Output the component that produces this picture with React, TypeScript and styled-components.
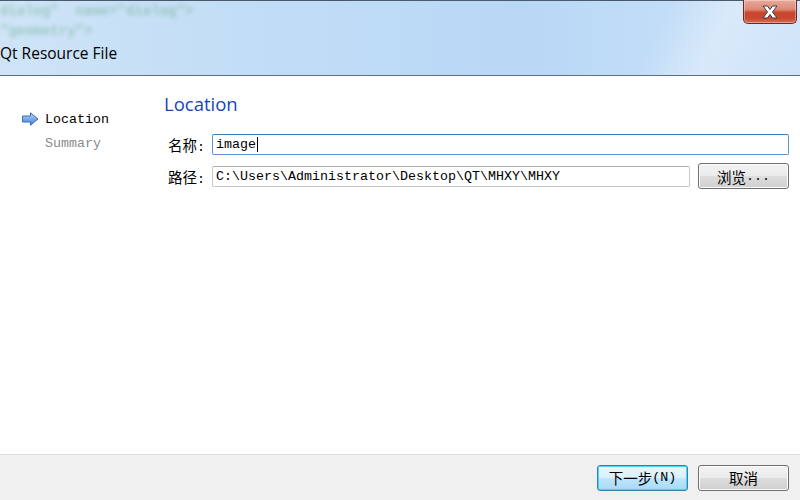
import React from "react";
import styled, { createGlobalStyle } from "styled-components";

const Global = createGlobalStyle`
  html, body { margin: 0; padding: 0; background: #ffffff; }
  body { width: 800px; height: 500px; overflow: hidden; }
  #root { width: 800px; height: 500px; }
`;

const Window = styled.div`
  width: 800px;
  height: 500px;
  display: flex;
  flex-direction: column;
  background: #ffffff;
  overflow: hidden;
`;

const TitleBar = styled.div`
  position: relative;
  height: 76px;
  flex: 0 0 76px;
  border-top: 1px solid #4a5b6e;
  border-bottom: 1px solid #5c6f86;
  box-sizing: border-box;
  background:
    linear-gradient(115deg, rgba(255,255,255,0) 0%, rgba(255,255,255,0) 80%, rgba(255,255,255,0.35) 88%, rgba(255,255,255,0.1) 100%),
    linear-gradient(90deg, #cfe4f7 0%, #c2ddf6 30%, #b9d8f6 65%, #c9e1f8 100%);
  display: flex;
  flex-direction: column;
  justify-content: flex-end;
  padding-bottom: 12px;
`;

const GhostCode = styled.div`
  position: absolute;
  left: 0;
  top: 0px;
  font-family: "Liberation Mono", monospace;
  font-size: 14px;
  line-height: 20px;
  font-weight: bold;
  color: #4fa070;
  opacity: 0.4;
  filter: blur(2.2px);
  white-space: pre;
`;

const TitleText = styled.div`
  font-family: "Open Sans", "Noto Sans", sans-serif;
  font-size: 15.5px;
  line-height: 20px;
  color: #000000;
  position: relative;
`;

const CloseButton = styled.div`
  position: absolute;
  right: 3px;
  top: -1px;
  width: 54px;
  height: 24px;
  box-sizing: border-box;
  border: 1px solid #6a2a1f;
  border-top: none;
  border-radius: 0 0 5px 5px;
  background: linear-gradient(180deg, #e9a899 0%, #de8a78 40%, #c9452c 55%, #c84a31 80%, #d66f55 100%);
  box-shadow: inset 0 0 0 1px rgba(255,255,255,0.35);
  display: flex;
  align-items: center;
  justify-content: center;
`;

const Body = styled.div`
  flex: 1;
  display: flex;
  flex-direction: row;
`;

const Sidebar = styled.div`
  width: 164px;
  flex: 0 0 164px;
  box-sizing: border-box;
  padding: 33px 0 0 22px;
  display: flex;
  flex-direction: column;
  gap: 4px;
`;

const NavItem = styled.div<{ $active?: boolean }>`
  display: flex;
  align-items: center;
  gap: 6px;
  height: 20px;
  font-family: "Liberation Mono", monospace;
  font-size: 13.33px;
  color: ${(p) => (p.$active ? "#000000" : "#8a8a8a")};
`;

const ArrowSlot = styled.span`
  width: 17px;
  height: 14px;
  display: inline-flex;
`;

const Main = styled.div`
  flex: 1;
  box-sizing: border-box;
  padding: 16px 11px 0 0;
  display: flex;
  flex-direction: column;
`;

const Heading = styled.div`
  font-family: "Open Sans", "Noto Sans", sans-serif;
  font-size: 18.5px;
  line-height: 24px;
  color: #1646b8;
  margin-bottom: 18px;
`;

const Form = styled.div`
  display: flex;
  flex-direction: column;
  gap: 8px;
`;

const Row = styled.div`
  display: flex;
  align-items: center;
  gap: 8px;
`;

const Label = styled.div`
  width: 36px;
  padding-left: 4px;
  white-space: nowrap;
  color: #000;
  display: flex;
  align-items: baseline;
`;

const Cjk = styled.span`
  font-family: "Noto Sans CJK SC", sans-serif;
  font-size: 14.5px;
`;

const Latin = styled.span`
  font-family: "Liberation Mono", monospace;
  font-size: 13.33px;
`;

const Field = styled.div<{ $focused?: boolean }>`
  flex: 1;
  height: 21px;
  box-sizing: border-box;
  border: 1px solid ${(p) => (p.$focused ? "#5d93c9" : "#c4c8cf")};
  border-top-color: ${(p) => (p.$focused ? "#3d7bbd" : "#abadb3")};
  border-radius: 2px;
  background: #fff;
  display: flex;
  align-items: center;
  padding-left: 3px;
  font-family: "Liberation Mono", monospace;
  font-size: 13.33px;
  color: #000;
  white-space: nowrap;
  overflow: hidden;
`;

const Caret = styled.span`
  display: inline-block;
  width: 1px;
  height: 15px;
  background: #000;
  margin-left: 1px;
`;

const Button = styled.div<{ $default?: boolean }>`
  width: 91px;
  height: 26px;
  box-sizing: border-box;
  border-radius: 3px;
  border: 1px solid ${(p) => (p.$default ? "#3c7fb1" : "#707070")};
  background: ${(p) =>
    p.$default
      ? "linear-gradient(180deg, #eaf6fd 0%, #d9f0fc 48%, #bee6fd 52%, #a7d9f5 100%)"
      : "linear-gradient(180deg, #f2f2f2 0%, #ebebeb 48%, #dddddd 52%, #cfcfcf 100%)"};
  box-shadow: ${(p) =>
    p.$default ? "inset 0 0 0 1px #48d3fb" : "inset 0 0 0 1px #fcfcfc"};
  display: flex;
  align-items: center;
  justify-content: center;
  color: #000;
`;

const Footer = styled.div`
  height: 46px;
  flex: 0 0 46px;
  box-sizing: border-box;
  background: #f0f0f0;
  border-top: 1px solid #dfdfdf;
  display: flex;
  align-items: center;
  justify-content: flex-end;
  gap: 10px;
  padding: 0 11px 0 0;
`;

const isCjk = (c: string) => /[\u3000-\u9fff\uff00-\uffef]/.test(c);

function Mixed({ text }: { text: string }) {
  const runs: { cjk: boolean; s: string }[] = [];
  for (const ch of text) {
    const c = isCjk(ch);
    const last = runs[runs.length - 1];
    if (last && last.cjk === c) last.s += ch;
    else runs.push({ cjk: c, s: ch });
  }
  return (
    <>
      {runs.map((r, i) =>
        r.cjk ? <Cjk key={i}>{r.s}</Cjk> : <Latin key={i}>{r.s}</Latin>
      )}
    </>
  );
}

function ArrowIcon() {
  return (
    <svg width="17" height="14" viewBox="0 0 17 14">
      <defs>
        <linearGradient id="ag" x1="0" y1="0" x2="0" y2="1">
          <stop offset="0" stopColor="#c2dcf8" />
          <stop offset="0.5" stopColor="#7aaae8" />
          <stop offset="1" stopColor="#4a82d4" />
        </linearGradient>
      </defs>
      <path
        d="M0.5 4 H8.5 V0.8 L16 7 L8.5 13.2 V10 H0.5 Z"
        fill="url(#ag)"
        stroke="#3a6cb4"
        strokeWidth="1"
        strokeLinejoin="round"
      />
    </svg>
  );
}

function CloseX() {
  return (
    <svg width="18" height="14" viewBox="0 0 18 14">
      <path
        d="M2 1 H6.5 L9 4.5 L11.5 1 H16 L11.5 7 L16 13 H11.5 L9 9.5 L6.5 13 H2 L6.5 7 Z"
        fill="#ffffff"
        stroke="#3d3d3d"
        strokeWidth="1"
        strokeLinejoin="round"
      />
    </svg>
  );
}

export default function App() {
  return (
    <>
      <Global />
      <Window>
        <TitleBar>
          <GhostCode>{'dialog"  name="dialog">\n"geometry">'}</GhostCode>
          <TitleText>Qt Resource File</TitleText>
          <CloseButton>
            <CloseX />
          </CloseButton>
        </TitleBar>
        <Body>
          <Sidebar>
            <NavItem $active>
              <ArrowSlot>
                <ArrowIcon />
              </ArrowSlot>
              Location
            </NavItem>
            <NavItem>
              <ArrowSlot />
              Summary
            </NavItem>
          </Sidebar>
          <Main>
            <Heading>Location</Heading>
            <Form>
              <Row>
                <Label>
                  <Mixed text="名称:" />
                </Label>
                <Field $focused>
                  image
                  <Caret />
                </Field>
              </Row>
              <Row>
                <Label>
                  <Mixed text="路径:" />
                </Label>
                <Field>C:\Users\Administrator\Desktop\QT\MHXY\MHXY</Field>
                <Button>
                  <Mixed text="浏览..." />
                </Button>
              </Row>
            </Form>
          </Main>
        </Body>
        <Footer>
          <Button $default>
            <Mixed text="下一步(N)" />
          </Button>
          <Button>
            <Mixed text="取消" />
          </Button>
        </Footer>
      </Window>
    </>
  );
}
